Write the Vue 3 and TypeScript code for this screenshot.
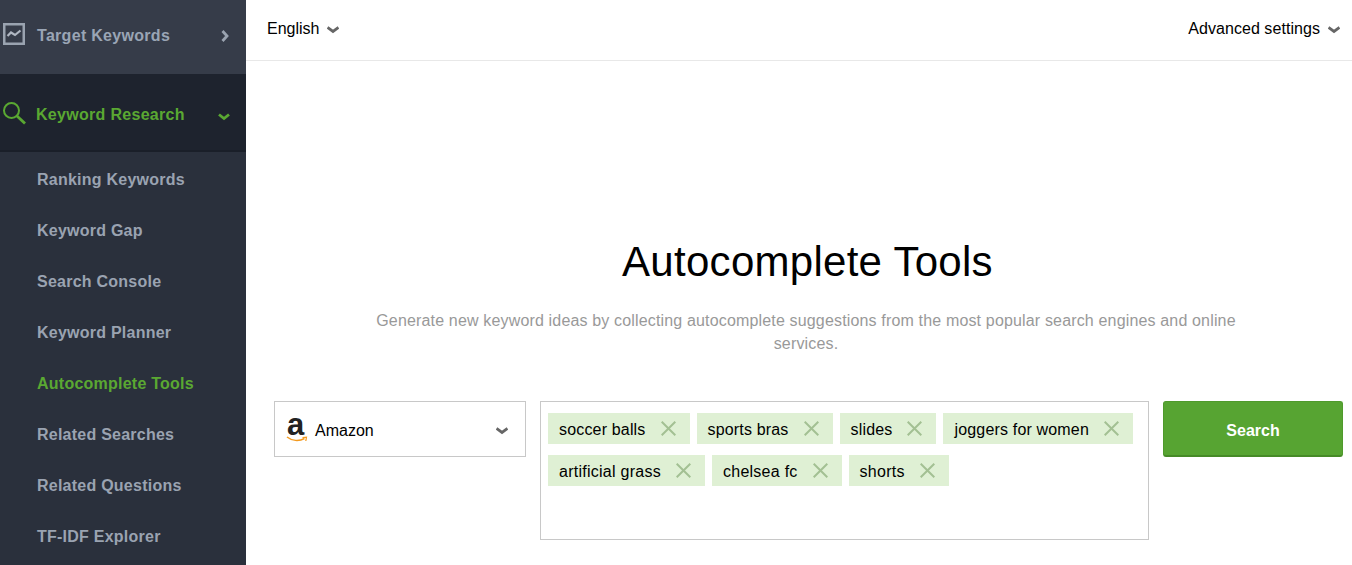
<script setup lang="ts">
const sub: string[] = ['Ranking Keywords', 'Keyword Gap', 'Search Console', 'Keyword Planner', 'Autocomplete Tools', 'Related Searches', 'Related Questions', 'TF-IDF Explorer']
const tagRows: string[][] = [['soccer balls', 'sports bras', 'slides', 'joggers for women'], ['artificial grass', 'chelsea fc', 'shorts']]
</script>

<template>
  <div class="page">
    <aside class="side">
      <div class="head top">
        <svg class="ic1" width="22" height="22" viewBox="0 0 22 22" fill="none">
          <rect x="1.25" y="1.25" width="19.5" height="19.5" stroke="#9aa3b0" stroke-width="2.5" />
          <path d="M4.5 13 L8 9.5 L12 12 L17.5 7.5" stroke="#b0b7c2" stroke-width="2.2" />
        </svg>
        <span class="ht">Target Keywords</span>
        <svg class="arr" width="8" height="12" viewBox="0 0 8 12" fill="none"><path d="M1.5 1 L6 6 L1.5 11" stroke="#9aa3b0" stroke-width="2.8" /></svg>
      </div>
      <div class="head active">
        <svg class="ic2" width="24" height="24" viewBox="0 0 24 24" fill="none">
          <circle cx="9.5" cy="9.5" r="7.5" stroke="#5aa832" stroke-width="2" />
          <path d="M15 15 L23 22.5" stroke="#5aa832" stroke-width="2.8" />
        </svg>
        <span class="ht">Keyword Research</span>
        <svg class="arr2" width="12" height="8" viewBox="0 0 12 8" fill="none"><path d="M1 1.5 L6 5.5 L11 1.5" stroke="#5aa832" stroke-width="2.8" /></svg>
      </div>
      <nav class="subnav">
        <div v-for="s in sub" :key="s" class="item" :class="{ on: s === 'Autocomplete Tools' }">{{ s }}</div>
      </nav>
    </aside>
    <main class="main">
      <header class="bar">
        <div class="dd">English<svg width="12" height="8" viewBox="0 0 12 8" fill="none"><path d="M.5 1.5 L6 5.5 L11.5 1.5" stroke="#666" stroke-width="2.8" /></svg></div>
        <div class="dd adv">Advanced settings<svg width="12" height="8" viewBox="0 0 12 8" fill="none"><path d="M.5 1.5 L6 5.5 L11.5 1.5" stroke="#666" stroke-width="2.8" /></svg></div>
      </header>
      <section class="body">
        <h1>Autocomplete Tools</h1>
        <p>Generate new keyword ideas by collecting autocomplete suggestions from the most popular search engines and online services.</p>
        <div class="form">
          <div class="select">
            <span class="logo">
              <span class="a">a</span>
              <svg class="smile" width="22" height="7" viewBox="0 0 22 7" fill="none">
                <path d="M1 1 C6 5 13 5.5 18.5 2.5" stroke="#f39a1f" stroke-width="1.5" />
                <path d="M16.5 1.5 L20.5 1.2 L19.8 5" stroke="#f39a1f" stroke-width="1.2" />
              </svg>
            </span>
            <span class="sname">Amazon</span>
            <svg class="sarr" width="12" height="8" viewBox="0 0 12 8" fill="none"><path d="M.5 1.5 L6 5.5 L11.5 1.5" stroke="#666" stroke-width="2.8" /></svg>
          </div>
          <div class="tags">
            <div v-for="(r, i) in tagRows" :key="i" class="row">
              <span v-for="t in r" :key="t" class="tag">{{ t }}
                <svg width="15" height="15" viewBox="0 0 15 15" fill="none"><path d="M.7 .7 L14.3 14.3 M14.3 .7 L.7 14.3" stroke="#a3c093" stroke-width="2" /></svg>
              </span>
            </div>
          </div>
          <button class="btn">Search</button>
        </div>
      </section>
    </main>
  </div>
</template>

<style>
html, body { margin: 0; padding: 0; background: #fff; overflow: hidden; }
</style>

<style scoped>
.page { display: flex; width: 1352px; height: 565px; overflow: hidden; font-family: "Liberation Sans", Arial, sans-serif; }
.side { width: 246px; flex: none; background: #2a303c; }
.head { display: flex; align-items: center; position: relative; font-weight: 700; font-size: 16px; box-sizing: border-box; letter-spacing: .3px; }
.top { height: 74px; background: #363c49; color: #9aa5b5; padding: 0 0 2px 3px; }
.top .ht { margin-left: 12px; }
.ic1, .ic2 { margin-bottom: 4px; }
.arr { position: absolute; left: 221px; top: 30px; }
.active { height: 78px; background: #1e232e; color: #5aa832; padding: 4px 0 0 2px; box-shadow: inset 0 -2px 0 #1a1f29; }
.active .ht { margin-left: 10px; }
.arr2 { position: absolute; left: 218px; top: 39px; }
.subnav { display: flex; flex-direction: column; }
.item { height: 51px; line-height: 55px; padding-left: 37px; color: #9aa3b1; font-weight: 700; font-size: 16px; letter-spacing: .24px; }
.item.on { color: #5aa832; }
.main { flex: 1; min-width: 0; display: flex; flex-direction: column; }
.bar { height: 58px; border-bottom: 1px solid #e8e8e8; display: flex; justify-content: space-between; align-items: center; padding: 0 12px 2px 21px; box-sizing: content-box; color: #000; font-size: 16px; }
.dd { display: flex; align-items: center; gap: 8px; }
.dd.adv { letter-spacing: .06px; }
.dd svg { margin-top: 2px; }
.body { flex: 1; text-align: center; }
h1 { margin: 175px 0 0; font-weight: 400; font-size: 42px; line-height: 52px; color: #000; text-align: center; width: 1123px; letter-spacing: .28px; }
p { width: 880px; margin: 21px 0 0 120px; font-size: 16px; line-height: 23px; color: #999; letter-spacing: .16px; }
.form { display: flex; align-items: flex-start; margin: 46px 0 0 28px; text-align: left; }
.select { width: 252px; height: 56px; box-sizing: border-box; border: 1px solid #c8c8c8; display: flex; align-items: center; padding: 4px 17px 0 11px; font-size: 16px; color: #000; }
.logo { width: 24px; height: 32px; position: relative; flex: none; }
.a { position: absolute; left: 1px; top: -7px; font-size: 31px; font-weight: 700; line-height: 34px; color: #222; }
.smile { position: absolute; left: 0; top: 21px; }
.sname { margin-left: 5px; flex: 1; }
.tags { width: 609px; height: 139px; box-sizing: border-box; margin-left: 14px; border: 1px solid #c8c8c8; padding: 11px 7px 0; display: flex; flex-direction: column; gap: 11px; }
.row { display: flex; gap: 7px; }
.row + .row .tag { letter-spacing: .26px; }
.tag { height: 31px; box-sizing: border-box; background: #dff0d4; display: flex; align-items: center; gap: 15px; padding: 2px 14px 0 11px; color: #000; font-size: 16px; white-space: nowrap; letter-spacing: .17px; }
.tag svg { margin-bottom: 2px; }
.btn { width: 180px; height: 56px; margin-left: 14px; background: #57a432; color: #fff; font: 700 16px "Liberation Sans", sans-serif; border: 1px solid #4f9a2c; border-bottom: 2px solid #468a27; border-radius: 3px; padding: 4px 0 0; }
</style>
